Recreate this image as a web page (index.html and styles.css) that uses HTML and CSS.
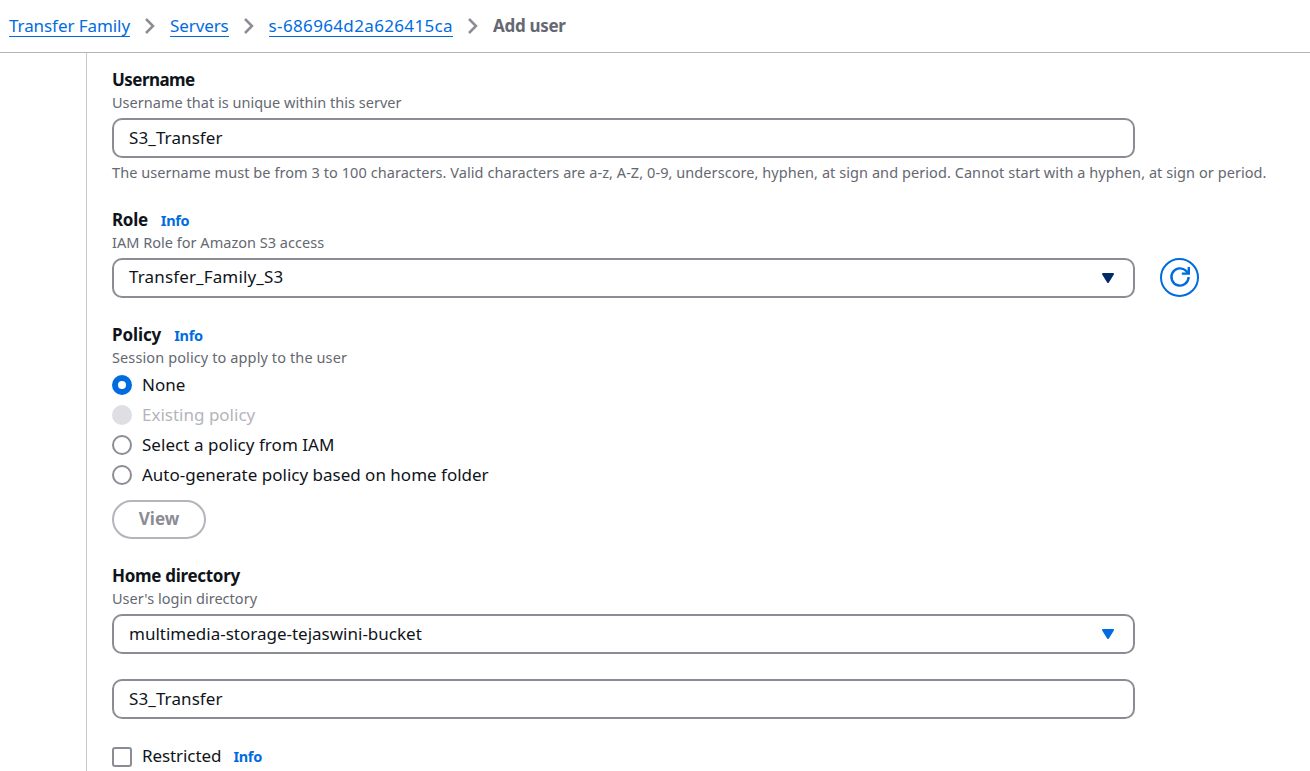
FILE: index.html
```html
<!DOCTYPE html>
<html lang="en">
<head>
<meta charset="utf-8">
<title>Add user</title>
<link rel="stylesheet" href="styles.css">
</head>
<body>
<nav class="crumbs">
  <a class="crumb family" href="#">Transfer Family</a>
  <svg class="chevron" viewBox="0 0 12 18"><path d="M2 2l7 7-7 7"/></svg>
  <a class="crumb servers" href="#">Servers</a>
  <svg class="chevron" viewBox="0 0 12 18"><path d="M2 2l7 7-7 7"/></svg>
  <a class="crumb server-id" href="#">s-686964d2a626415ca</a>
  <svg class="chevron" viewBox="0 0 12 18"><path d="M2 2l7 7-7 7"/></svg>
  <span class="current">Add user</span>
</nav>
<div class="layout">
  <aside class="side"></aside>
  <main class="form">
    <section class="field username">
      <div class="label"><b>Username</b></div>
      <div class="hint">Username that is unique within this server</div>
      <div class="box"><span class="short">S3_Transfer</span></div>
      <div class="hint constraint">The username must be from 3 to 100 characters. Valid characters are a-z, A-Z, 0-9, underscore, hyphen, at sign and period. Cannot start with a hyphen, at sign or period.</div>
    </section>
    <section class="field role">
      <div class="label"><b>Role</b><a class="info" href="#">Info</a></div>
      <div class="hint">IAM Role for Amazon S3 access</div>
      <div class="row">
        <div class="box"><span class="role-name">Transfer_Family_S3</span><svg class="caret dark" viewBox="0 0 14 12"><path d="M2 2h10L7 10z"/></svg></div>
        <button class="refresh" aria-label="Refresh"><svg viewBox="0 0 20 20"><path d="M18.6 10a8.6 8.6 0 1 1-2.5-6.1l2.3 2.2M18.8 0v6.6h-7"/></svg></button>
      </div>
    </section>
    <section class="field policy">
      <div class="label"><b>Policy</b><a class="info" href="#">Info</a></div>
      <div class="hint session">Session policy to apply to the user</div>
      <div class="option"><i class="radio checked"></i><span>None</span></div>
      <div class="option disabled"><i class="radio"></i><span>Existing policy</span></div>
      <div class="option"><i class="radio"></i><span class="iam">Select a policy from IAM</span></div>
      <div class="option"><i class="radio"></i><span>Auto-generate policy based on home folder</span></div>
      <button class="view">View</button>
    </section>
    <section class="field home">
      <div class="label"><b>Home directory</b></div>
      <div class="hint">User's login directory</div>
      <div class="box"><span>multimedia-storage-tejaswini-bucket</span><svg class="caret" viewBox="0 0 14 12"><path d="M2 2h10L7 10z"/></svg></div>
      <div class="box second"><span class="short">S3_Transfer</span></div>
      <div class="option restricted"><i class="check"></i><span>Restricted</span><a class="info" href="#">Info</a></div>
    </section>
  </main>
</div>
</body>
</html>
```

FILE: styles.css
```css
* { box-sizing: border-box; }
body { margin: 0; height: 771px; overflow: hidden; background: #fff; color: #0f141a; font: 17px/25px "Noto Sans", sans-serif; }
a { color: #006ce0; text-decoration: none; }
.crumbs { display: flex; height: 53px; padding: 13px 9px 0; border-bottom: 1px solid #b4b4bb; }
.crumb { height: 24px; border-bottom: 1px solid #006ce0; }
.family { letter-spacing: -0.07px; }
.servers { letter-spacing: -0.1px; }
.server-id { letter-spacing: 0.35px; }
.chevron { width: 12px; height: 18px; margin: 4px 13.8px 0 14.2px; fill: none; stroke: #8c8c94; stroke-width: 2.5; }
.current { color: #656871; font-weight: 700; letter-spacing: -0.3px; }
.layout { display: flex; height: 718px; }
.side { width: 87px; border-right: 1px solid #c6c6cd; }
.form { flex: 1; padding: 14px 0 0 25px; }
.field { display: flex; flex-direction: column; align-items: flex-start; }
.label { display: flex; height: 25px; gap: 13px; }
.label b { font-weight: 700; letter-spacing: -0.3px; }
.username .label b { letter-spacing: -0.55px; }
.policy .label b { letter-spacing: -0.1px; }
.info { font-size: 14.5px; font-weight: 700; line-height: 27px; letter-spacing: -0.3px; }
.hint { height: 20px; margin-bottom: 6px; color: #656871; font-size: 14.5px; line-height: 20px; letter-spacing: 0.02px; white-space: nowrap; }
.session { margin-bottom: 3px; letter-spacing: 0.11px; }
.box { display: flex; align-items: center; justify-content: space-between; width: 1023px; height: 40px; padding: 0 18px 2px 15px; border: 2px solid #8c8c94; border-radius: 10px; }
.short { letter-spacing: 0.1px; }
.role-name { padding-bottom: 2px; letter-spacing: 0.14px; }
.iam { letter-spacing: 0.04px; }
.username { height: 140px; }
.role { height: 115px; }
.policy { height: 241px; }
.constraint { margin-top: 4px; letter-spacing: 0.068px; }
.row { display: flex; gap: 25px; }
.caret { width: 14px; height: 12px; margin-top: 2px; fill: #006ce0; stroke: #006ce0; stroke-width: 2; stroke-linejoin: round; }
.dark { fill: #002b66; stroke: #002b66; }
.refresh { width: 39px; height: 39px; padding: 0 0 2px; border: 2px solid #006ce0; border-radius: 50%; background: #fff; }
.refresh svg { display: block; width: 20px; height: 20px; margin: auto; overflow: visible; fill: none; stroke: #006ce0; stroke-width: 2.4; }
.option { display: flex; align-items: center; height: 30px; gap: 10px; }
.option > span { padding-bottom: 1px; }
.radio { width: 20px; height: 20px; border: 2px solid #8c8c94; border-radius: 50%; }
.checked { border: 6px solid #006ce0; }
.disabled { color: #b4b4bb; }
.disabled .radio { border: 0; background: #dedee3; }
.view { width: 94px; height: 39px; margin-top: 10px; padding: 0 0 2px; border: 2px solid #b4b4bb; border-radius: 20px; background: #fff; color: #8c8c94; font: 700 17px/25px "Noto Sans", sans-serif; }
.second { margin-top: 25px; }
.restricted { margin-top: 23px; }
.restricted > span { padding-bottom: 3px; letter-spacing: -0.08px; }
.restricted .info { margin: -1px 0 0 2px; }
.check { width: 20px; height: 20px; border: 2px solid #8c8c94; border-radius: 3px; }
```
